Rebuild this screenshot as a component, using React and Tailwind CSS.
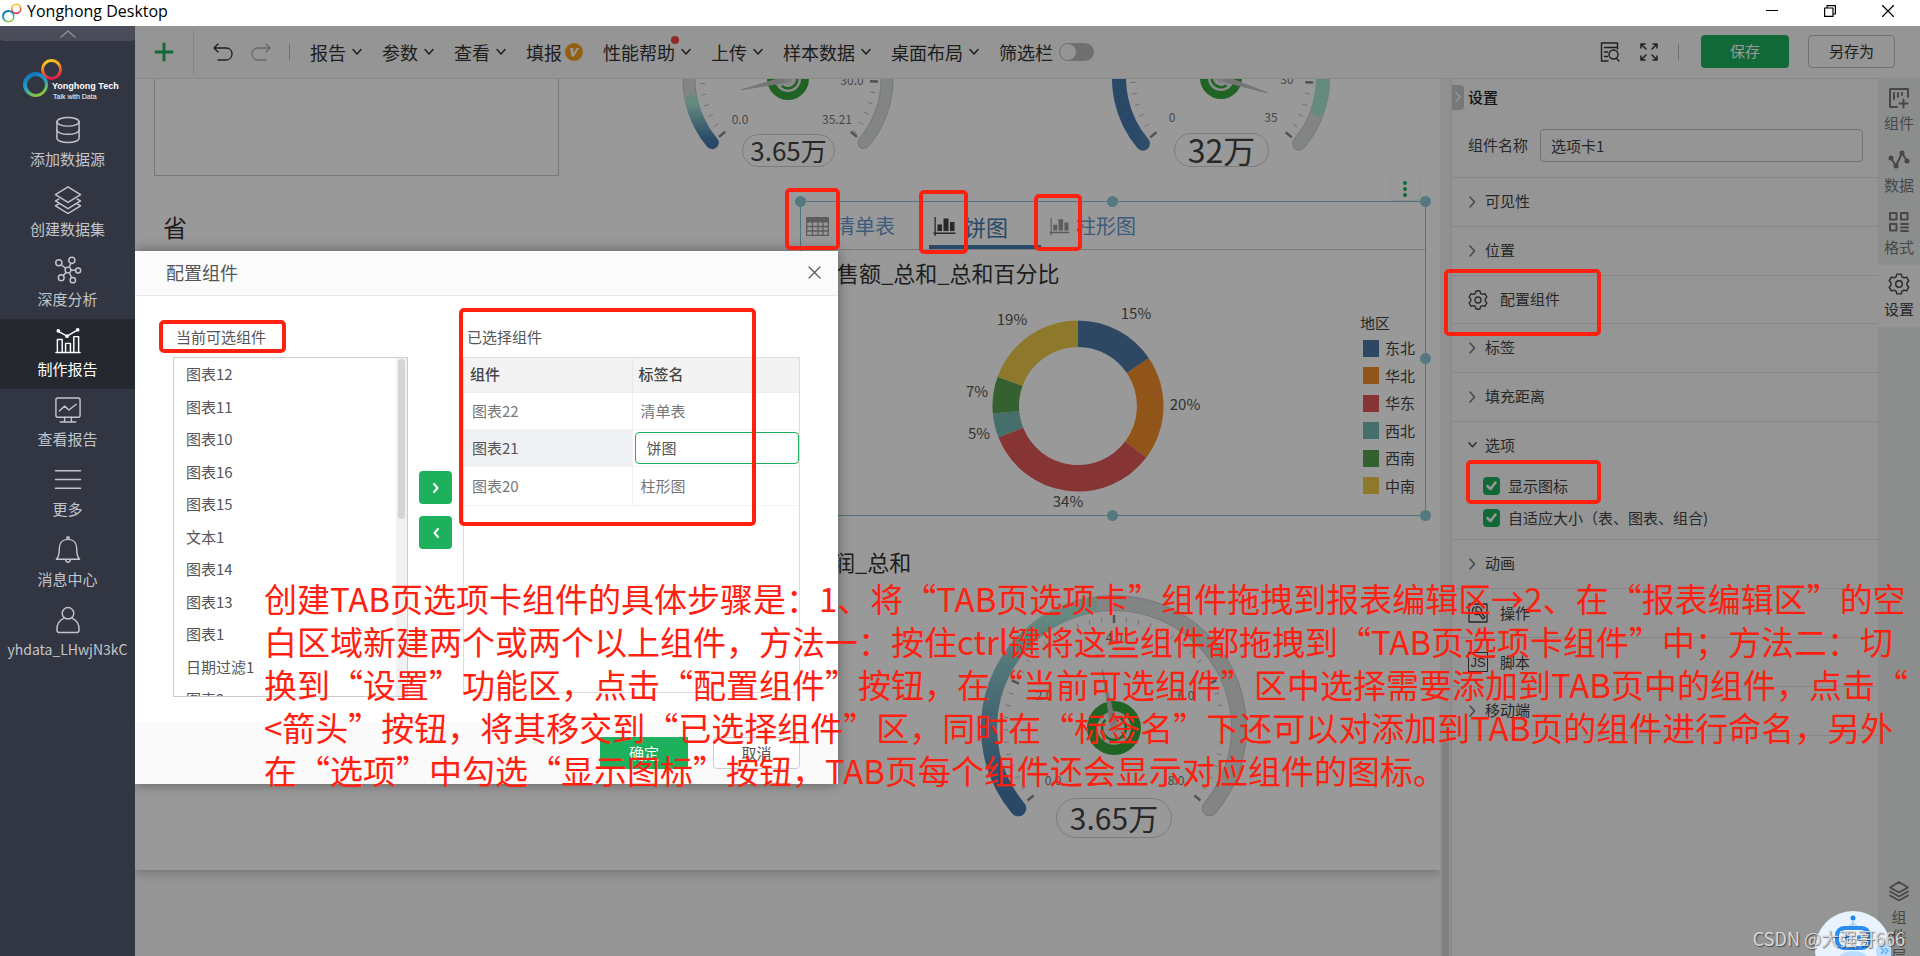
import React from "react";

const polar = (cx, cy, r, deg) => {
  const a = (deg * Math.PI) / 180;
  return [cx + r * Math.sin(a), cy - r * Math.cos(a)];
};

const arc = (cx, cy, r, from, to) => {
  const [x1, y1] = polar(cx, cy, r, from);
  const [x2, y2] = polar(cx, cy, r, to);
  return `M${x1} ${y1}A${r} ${r} 0 ${to - from > 180 ? 1 : 0} 1 ${x2} ${y2}`;
};

const ringSlice = (c, ro, ri, from, to) => {
  const [x1, y1] = polar(c, c, ro, from);
  const [x2, y2] = polar(c, c, ro, to);
  const [x3, y3] = polar(c, c, ri, to);
  const [x4, y4] = polar(c, c, ri, from);
  return `M${x1} ${y1}A${ro} ${ro} 0 0 1 ${x2} ${y2}L${x3} ${y3}A${ri} ${ri} 0 0 0 ${x4} ${y4}Z`;
};

function Svg({ className, children, viewBox = "0 0 24 24", width = 1.5 }) {
  return (
    <svg className={className} viewBox={viewBox} fill="none" stroke="currentColor" strokeWidth={width} strokeLinecap="round" strokeLinejoin="round" aria-hidden="true">
      {children}
    </svg>
  );
}

const ChevronDown = ({ className = "h-[10px] w-[10px]" }) => (
  <Svg className={className} viewBox="0 0 10 10">
    <path d="M1 2.500 5 7l4-4.500" />
  </Svg>
);
const ChevronRight = () => (
  <Svg className="h-3 w-[9px] text-[#777]" viewBox="0 0 9 12">
    <path d="M2 1l4.500 5L2 11" />
  </Svg>
);

function Rings({ className, id }) {
  return (
    <svg className={className} viewBox="0 0 40 38" fill="none" aria-hidden="true">
      <defs>
        <linearGradient id={`${id}a`} x1="0.300" y1="0" x2="0.500" y2="1">
          <stop offset="0" stopColor="#f8d418" />
          <stop offset="0.300" stopColor="#f7a81e" />
          <stop offset="0.600" stopColor="#ee5a30" />
          <stop offset="1" stopColor="#e3104e" />
        </linearGradient>
        <linearGradient id={`${id}b`} x1="0.200" y1="0" x2="0.600" y2="1">
          <stop offset="0" stopColor="#1668b4" />
          <stop offset="0.500" stopColor="#1ba0c4" />
          <stop offset="1" stopColor="#9acb2c" />
        </linearGradient>
      </defs>
      <path fillRule="evenodd" fill={`url(#${id}a)`} d="M28.500 0a10.500 10.500 0 1 1 0 21a10.500 10.500 0 1 1 0-21ZM28.500 3a7.500 7.500 0 1 0 0 15a7.500 7.500 0 1 0 0-15Z" />
      <path fillRule="evenodd" fill={`url(#${id}b)`} d="M12.500 13a12.500 12.500 0 1 1 0 25a12.500 12.500 0 1 1 0-25ZM13 17a9 9 0 1 0 0 18a9 9 0 1 0 0-18Z" />
    </svg>
  );
}

/* ---------- left navigation ---------- */

const navIcons = {
  db: (
    <>
      <ellipse cx="14" cy="6" rx="11.500" ry="4.500" />
      <path d="M2.500 6v17c0 2.500 5.200 4.500 11.500 4.500s11.500-2 11.500-4.500V6" />
      <path d="M2.500 14.500c0 2.500 5.200 4.500 11.500 4.500s11.500-2 11.500-4.500" />
    </>
  ),
  layers: (
    <>
      <path d="M14 1 27 9 14 17 1 9Z" />
      <path d="M4.500 13.500 1 15.500l13 8 13-8-3.500-2" />
      <path d="M4.500 18.500 1 20.500l13 8 13-8-3.500-2" />
    </>
  ),
  graph: (
    <>
      <circle cx="4.500" cy="7" r="3.200" />
      <circle cx="18" cy="4.500" r="3.200" />
      <circle cx="24.500" cy="15" r="2.600" />
      <circle cx="7" cy="22.500" r="3" />
      <circle cx="19" cy="25" r="2.800" />
      <circle cx="14" cy="14.500" r="3" />
      <path d="M7 9 11.500 12.700M17 7.500l-1.800 4.200M17 14.700h4.800M12 17l-3 3.300M15.300 17.300l2.500 5" />
    </>
  ),
  report: (
    <>
      <path d="M3 27.500V14h5v13.500M11.500 27.500V18h5v9.500M20 27.500V11h5v16.500M1.500 27.500h25" />
      <path d="M4 5.500 13 10.500 24 4" />
      <circle cx="4" cy="5" r="1.200" />
      <circle cx="13" cy="10.500" r="1.200" />
      <circle cx="24" cy="4" r="1.200" />
    </>
  ),
  screen: (
    <>
      <rect x="1.500" y="2" width="25" height="20" rx="2" />
      <path d="M5 15.500 10.500 10.500 15 14.500 22.500 8.500M10.500 22v4.500M17.500 22v4.500M6 27h16" />
    </>
  ),
  menu: <path d="M1 5h26M1 14h26M1 23h26" />,
  bell: (
    <>
      <path d="M2 24c2.500-2 3-5 3-11 0-6 3.500-9.500 9-9.500s9 3.500 9 9.500c0 6 .5 9 3 11Z" />
      <path d="M13 3V1h2v2M11.500 24.500c.5 3.500 4.500 3.500 5 0" />
    </>
  ),
  user: (
    <>
      <circle cx="14" cy="7.500" r="6" />
      <path d="M10 12.500C5 14.500 2.500 18.500 2.500 24.500c0 2 1 3 3 3h17c2 0 3-1 3-3 0-6-2.500-10-7.500-12" />
    </>
  ),
};

const navItems = [
  ["db", "添加数据源"],
  ["layers", "创建数据集"],
  ["graph", "深度分析"],
  ["report", "制作报告"],
  ["screen", "查看报告"],
  ["menu", "更多"],
  ["bell", "消息中心"],
  ["user", "yhdata_LHwjN3kC"],
];

function Sidebar() {
  return (
    <nav className="flex w-[135px] shrink-0 flex-col bg-[#323643] text-[#c3c5ca]">
      <button aria-label="收起" className="flex h-[15px] w-full items-center justify-center rounded-b-sm bg-[#4a4d59] text-[#8f919a]">
        <Svg className="h-2 w-4" viewBox="0 0 16 8"><path d="M1 7l7-6 7 6" /></Svg>
      </button>
      <div className="flex h-[68px] items-start pl-[23px] pt-[18px]">
        <Rings id="nav" className="h-[38px] w-10 shrink-0" />
        <div className="-ml-[11px] mt-[22px] whitespace-nowrap font-['Liberation_Sans',sans-serif] text-white">
          <div className="text-[9px] font-bold leading-[11px]">Yonghong Tech</div>
          <div className="pl-px text-[7px] leading-[9px]">Talk with Data</div>
        </div>
      </div>
      {navItems.map(([icon, label]) => (
        <a key={label} href={`#${icon}`} className={`flex h-[70px] flex-col items-center gap-[3px] pt-[7px] ${icon === "report" ? "bg-[#25282f] text-white" : ""}`}>
          <Svg className="h-7 w-7" viewBox="0 0 28 29">{navIcons[icon]}</Svg>
          <span className={`leading-6 ${icon === "user" ? "text-[14px]" : "text-[15px]"}`}>{label}</span>
        </a>
      ))}
    </nav>
  );
}

/* ---------- toolbar ---------- */

function MenuItem({ label, dot }) {
  return (
    <button className="relative flex items-center gap-[6px]">
      {label}
      <ChevronDown />
      {dot && <span className="absolute right-3 -top-1 h-2 w-2 rounded-full bg-[#f0453f]" />}
    </button>
  );
}

function Toolbar() {
  return (
    <header className="flex h-[53px] shrink-0 items-center border-b border-[#e4e4e4] bg-[#f8f8f8] text-[#333]">
      <button aria-label="新建" className="flex h-11 w-[59px] items-center justify-center border-r border-[#dedede] text-[#1db05d]">
        <Svg className="h-5 w-5" width={3.5}><path d="M12 1v22M1 12h22" strokeLinecap="butt" /></Svg>
      </button>
      <div className="flex items-center gap-[18px] pl-[19px]">
        <button aria-label="撤销"><Svg className="h-5 w-5" viewBox="0 0 20 20" width={1.3}><path d="M5 2 1 6l4 4M1.500 6H13c8 0 8 12 0 12H5" /></Svg></button>
        <button aria-label="重做" className="text-[#aaa]"><Svg className="h-5 w-5" viewBox="0 0 20 20" width={1.3}><path d="M15 2l4 4-4 4M18.500 6H7c-8 0-8 12 0 12h8" /></Svg></button>
        <span className="h-4 w-px bg-[#bbb]" />
      </div>
      <div className="flex items-center gap-5 whitespace-nowrap pl-5 text-[18px] leading-6">
        <MenuItem label="报告" />
        <MenuItem label="参数" />
        <MenuItem label="查看" />
        <button className="flex items-center gap-[3px]">
          填报
          <svg className="h-[18px] w-[18px]" viewBox="0 0 18 18" aria-hidden="true">
            <circle cx="9" cy="9" r="9" fill="#f5a01e" />
            <path d="M5 5h3l.6 5L11.500 5H14L9 13.500H6.500Z" fill="#fff" />
          </svg>
        </button>
        <MenuItem label="性能帮助" dot />
        <MenuItem label="上传" />
        <MenuItem label="样本数据" />
        <MenuItem label="桌面布局" />
        <div className="flex items-center gap-[6px]">
          <span id="filter-bar">筛选栏</span>
          <button role="switch" aria-checked="false" aria-labelledby="filter-bar" className="flex h-[18px] w-[35px] items-center rounded-full bg-[#bbb] p-px">
            <span className="h-4 w-4 rounded-full bg-[#f8f8f8]" />
          </button>
        </div>
      </div>
      <div className="ml-auto flex items-center gap-5 pr-[25px] text-[15px]">
        <button aria-label="预览"><Svg className="h-5 w-5" viewBox="0 0 20 20" width={1.4}><path d="M8 19H1.500V1h16v6M4.500 5.500h13M4.500 10h3M4.500 14.500h3" /><circle cx="13.500" cy="12.500" r="4.500" /><path d="M16.500 16.500 19 19" /></Svg></button>
        <button aria-label="全屏"><Svg className="h-[18px] w-[18px]" viewBox="0 0 18 18"><path d="M1 5V1h4M1 1l5 5M13 1h4v4M17 1l-5 5M1 13v4h4M1 17l5-5M17 13v4h-4M17 17l-5-5" /></Svg></button>
        <span className="mr-[2px] h-4 w-px bg-[#bbb]" />
        <button className="mb-px h-[33px] w-[88px] rounded-sm bg-[#1db05d] text-white">保存</button>
        <button className="-ml-px mb-px h-[33px] w-[87px] rounded-sm border border-[#bdbdbd]">另存为</button>
      </div>
    </header>
  );
}

/* ---------- report canvas ---------- */

function Gauge({ id, className, cx, cy, r, band, value, max, step, minor, labels, hub, vertical = true, w, h }) {
  const angle = (v) => -130 + (v / max) * 260;
  const tickR = r - band / 2 - r * 0.065;
  const ticks = [];
  for (let v = 0; v <= max + 0.001; v += minor) ticks.push([v, Math.abs(v / step - Math.round(v / step)) < 0.01]);
  if (max % step > 0.01) ticks.push([max, true]);
  const a = angle(value);
  const tip = polar(cx, cy, r * 0.48, a);
  const l = polar(cx, cy, 3, a - 90);
  const rr = polar(cx, cy, 3, a + 90);
  return (
    <svg className={className} viewBox={`0 0 ${w} ${h}`} fill="none" role="img" aria-label="仪表盘">
      <defs>
        <linearGradient id={id} x1="0" y1={vertical ? 1 : 0} x2={vertical ? 0 : 1} y2="0">
          <stop offset="0.080" stopColor="#467bae" />
          <stop offset="0.950" stopColor="#a8e6d6" />
        </linearGradient>
      </defs>
      <path d={arc(cx, cy, r, -130, 130)} stroke="#c4caca" strokeWidth={band} strokeLinecap="round" />
      <path d={arc(cx, cy, r, -130, 130)} stroke="#d9dedc" strokeWidth={band - 2} strokeLinecap="round" />
      <path d={arc(cx, cy, r, -130, a)} stroke={`url(#${id})`} strokeWidth={band} strokeLinecap="round" />
      {ticks.map(([v, major]) => {
        const [x1, y1] = polar(cx, cy, tickR - (major ? 4 : 3), angle(v));
        const [x2, y2] = polar(cx, cy, tickR + (major ? 4 : 2), angle(v));
        return <line key={v} x1={x1} y1={y1} x2={x2} y2={y2} stroke={major ? "#888" : "#bbb"} strokeWidth={major ? 2.5 : 1} />;
      })}
      <circle cx={cx} cy={cy} r={hub} fill="#34a73e" />
      <circle cx={cx} cy={cy} r={hub * 0.62} fill="#e8e8e8" />
      <path d={arc(cx, cy, hub * 0.44, a + 35, a + 325)} stroke="#34a73e" strokeWidth="2.500" />
      <path d={`M${l[0]} ${l[1]}L${tip[0]} ${tip[1]}L${rr[0]} ${rr[1]}Z`} fill="#c4c4c4" stroke="#c4c4c4" />
      <circle cx={cx} cy={cy} r="4" fill="#cfcfcf" />
      {labels.map(([t, x, y]) => (
        <text key={t} x={x} y={y + 4} textAnchor="middle" fill="#777" className="text-[12px]">{t}</text>
      ))}
    </svg>
  );
}

const slices = [
  [0, 56, "#4e79a7"],
  [56, 127, "#f28e2c"],
  [127, 248.5, "#e15759"],
  [248.5, 265, "#76b7b2"],
  [265, 290, "#59a14f"],
  [290, 360, "#edc949"],
];

const pieLabels = [
  ["19%", 69, 33],
  ["15%", 193, 27],
  ["20%", 242, 118],
  ["34%", 125, 215],
  ["5%", 36, 147],
  ["7%", 34, 105],
];

const legend = [
  ["东北", "bg-[#4e79a7]"],
  ["华北", "bg-[#f28e2c]"],
  ["华东", "bg-[#e15759]"],
  ["西北", "bg-[#76b7b2]"],
  ["西南", "bg-[#59a14f]"],
  ["中南", "bg-[#edc949]"],
];

const BarIcon = ({ className }) => (
  <svg className={className} viewBox="0 0 22 19" fill="currentColor" aria-hidden="true">
    <path d="M1 0h1.300v15.500H22V17H2.300v2H1v-2H0v-1.500h1ZM4 7.500h4.500V14H4ZM10 1.500h5V14h-5ZM16.500 5H21v9h-4.500Z" />
  </svg>
);

const TableIcon = () => (
  <svg className="h-[19px] w-[23px] text-[#999]" viewBox="0 0 23 19" fill="none" stroke="currentColor" aria-hidden="true">
    <path d="M.7.700h21.600v17.600H.7ZM.7 9.500h21.600M.7 14h21.600M6.500 5v13M12 5v13M17 5v13" strokeWidth="1.300" />
    <path d="M.7.700h21.600V5H.7Z" fill="currentColor" />
  </svg>
);

const handles = [
  "-left-[6px] -top-[6px]",
  "left-1/2 -ml-[6px] -top-[6px]",
  "-right-[6px] -top-[6px]",
  "-right-[6px] top-1/2 -mt-[6px]",
  "-right-[6px] -bottom-[6px]",
  "left-1/2 -ml-[6px] -bottom-[6px]",
  "-left-[6px] -bottom-[6px]",
  "-left-[6px] top-1/2 -mt-[6px]",
];

function TabCard() {
  return (
    <section className="absolute left-[665px] top-[122px] h-[315px] w-[626px] border border-[#86c4d4]">
      <div role="tablist" className="flex h-12 items-end border-b border-[#ccc] pl-[5px] text-[20px] text-[#6698cf]">
        <button role="tab" aria-selected="false" className="flex h-[42px] w-[123px] items-center gap-[6px] whitespace-nowrap pb-1">
          <TableIcon />清单表
        </button>
        <button role="tab" aria-selected="true" className="flex h-[42px] w-[112px] items-center gap-2 whitespace-nowrap border-b-4 border-[#457aae] pl-1 text-[22px] text-[#457aae]">
          <BarIcon className="h-[19px] w-[23px] text-[#444]" />饼图
        </button>
        <button role="tab" aria-selected="false" className="flex h-[42px] items-center gap-[6px] whitespace-nowrap pb-1 pl-2">
          <BarIcon className="h-[17px] w-[21px] text-[#999]" />柱形图
        </button>
      </div>
      <h2 className="pl-[14px] pt-[5px] text-[22px] leading-[34px] text-[#333]">销售额_总和_总和百分比</h2>
      <svg className="absolute left-[142px] top-[85px] h-[226px] w-[270px]" viewBox="0 0 270 226" role="img" aria-label="销售额占比">
        <g transform="translate(49.500 33.500)">
          {slices.map(([a, b, c]) => <path key={a} d={ringSlice(85.5, 85.5, 59, a, b)} fill={c} />)}
        </g>
        {pieLabels.map(([t, x, y]) => (
          <text key={t} x={x} y={y + 5} textAnchor="middle" fill="#555" className="text-[15px]">{t}</text>
        ))}
      </svg>
      <div className="absolute right-[34px] top-[111px] text-[15px] text-[#444]">
        <div className="leading-5">地区</div>
        <ul className="flex h-[164px] w-[31px] flex-col justify-between pt-1">
          {legend.map(([name, bg]) => (
            <li key={name} className="ml-[3px] flex items-center gap-[6px] whitespace-nowrap leading-[22px]">
              <span className={`h-[17px] w-4 shrink-0 ${bg}`} />{name}
            </li>
          ))}
        </ul>
      </div>
      {handles.map((pos) => <span key={pos} className={`absolute h-[11px] w-[11px] rounded-full bg-[#90c8d6] ${pos}`} />)}
      <button aria-label="更多操作" className="absolute -top-[25px] right-[6px] flex h-[23px] w-7 items-center justify-center rounded bg-white text-[#1db05d] shadow">
        <svg className="h-4 w-1" viewBox="0 0 4 16" fill="currentColor" aria-hidden="true"><circle cx="2" cy="2" r="2" /><circle cx="2" cy="8" r="2" /><circle cx="2" cy="14" r="2" /></svg>
      </button>
    </section>
  );
}

const pill = "absolute flex items-center justify-center rounded-full border border-[#d0d0d0] pb-[2px] text-[#444]";

function Canvas() {
  return (
    <div className="min-w-0 flex-1 overflow-hidden bg-[#f8f8f8]">
      <div className="relative h-[791px] overflow-hidden bg-white shadow-[0_2px_10px_rgba(0,0,0,0.25)]">
        <div className="absolute left-[19px] top-0 h-[97px] w-[405px] border-x border-b border-[#c8c8c8]" />
        <h2 className="absolute left-[28px] top-[131px] text-[24px] leading-[34px] text-[#333]">省</h2>

        <Gauge id="g1" className="absolute left-[543px] top-0 h-[80px] w-[220px]" w={220} h={80} cx={110} cy={0} r={99} band={13} hub={21} value={3.65} max={35.21} step={10} minor={1}
          labels={[["0.0", 62, 41], ["35.21", 159, 41], ["30.0", 174, 2]]} />
        <div className={`${pill} left-[607px] top-[55px] h-[33px] w-[93px] text-[26px]`}>3.65万</div>

        <Gauge id="g2" className="absolute left-[971px] top-0 h-[80px] w-[230px]" w={230} h={80} cx={115} cy={-1} r={102} band={14} hub={21} value={32} max={35} step={10} minor={1} vertical={false}
          labels={[["0", 66, 39], ["35", 165, 39], ["30", 181, 1]]} />
        <div className={`${pill} left-[1039px] top-[54px] h-[34px] w-[95px] text-[32px]`}>32万</div>

        <TabCard />

        <h2 className="absolute left-[676px] top-[465px] text-[22px] leading-[34px] text-[#333]">利润_总和</h2>
        <Gauge id="g3" className="absolute left-[839px] top-[509px] h-[240px] w-[280px]" w={280} h={240} cx={140} cy={140} r={125} band={16} hub={27} value={3.65} max={8} step={2} minor={0.2}
          labels={[["0.0", 79, 193], ["2.0", 70, 108], ["4.0", 140, 50], ["6.0", 212, 108], ["8.0", 202, 193]]} />
        <div className={`${pill} left-[921px] top-[719px] h-10 w-[116px] text-[30px]`}>3.65万</div>
      </div>
    </div>
  );
}

/* ---------- settings panel ---------- */

const Gear = ({ className }) => (
  <Svg className={className} viewBox="0 0 20 20" width={1.3}>
    <path d="M8 1h4l.6 2.400 1.900 1 2.400-.7 2 3.400L17.200 9v2l1.700 1.900-2 3.400-2.400-.7-1.900 1L12 19H8l-.6-2.400-1.900-1-2.400.7-2-3.400L2.800 11V9L1.100 7.100l2-3.400 2.400.7 1.900-1Z" />
    <circle cx="10" cy="10" r="3" />
  </Svg>
);

const row = "flex w-full items-center border-b border-[#e2e2e2] pl-4";

const Section = ({ label }) => (
  <button className={`${row} h-[49px] gap-2 pb-px`}><ChevronRight />{label}</button>
);

function Check({ id, label }) {
  return (
    <div className="flex h-8 items-center gap-2 pl-[31px]">
      <span className="relative flex h-[18px] w-[17px]">
        <input id={id} type="checkbox" defaultChecked className="h-[18px] w-[17px] appearance-none rounded-sm bg-[#1db05d]" />
        <Svg className="pointer-events-none absolute left-[3px] top-1 h-[10px] w-[11px] text-white" viewBox="0 0 11 10" width={2.5}><path d="M1.500 5 4.500 8 9.500 1.500" /></Svg>
      </span>
      <label htmlFor={id} className="whitespace-nowrap">{label}</label>
    </div>
  );
}

function SettingsPanel() {
  return (
    <aside className="w-[427px] shrink-0 border-l border-[#e2e2e2] bg-[#f8f8f8] text-[15px] text-[#444]">
      <div className="flex items-center gap-1 pt-1">
        <button aria-label="收起面板" className="flex h-[25px] w-3 items-center justify-center rounded-r-sm bg-[#c9c9c9] text-white">
          <Svg className="h-3 w-2" viewBox="0 0 9 12"><path d="M2 1l5 5-5 5" /></Svg>
        </button>
        <h2 className="pb-px font-medium leading-[27px] text-[#222]">设置</h2>
      </div>
      <div className="flex h-[67px] items-center gap-3 border-b border-[#e2e2e2] pl-4 pr-[15px] pt-[2px]">
        <label htmlFor="component-name" className="whitespace-nowrap">组件名称</label>
        <input id="component-name" defaultValue="选项卡1" className="h-[33px] min-w-0 flex-1 rounded-sm border border-[#bdbdbd] bg-transparent px-[10px]" />
      </div>
      <Section label="可见性" />
      <Section label="位置" />
      <button className={`${row} h-12 gap-3`}><Gear className="h-5 w-5" />配置组件</button>
      <Section label="标签" />
      <Section label="填充距离" />
      <div className="h-[118px] border-b border-[#e2e2e2]">
        <button className="flex h-12 w-full items-center gap-2 pb-[2px] pl-4"><ChevronDown className="h-[10px] w-[9px]" />选项</button>
        <Check id="show-icon" label="显示图标" />
        <Check id="fit-size" label="自适应大小（表、图表、组合)" />
      </div>
      <Section label="动画" />
      <button className={`${row} h-[49px] gap-3`}>
        <Svg className="h-5 w-5" viewBox="0 0 20 20" width={1.3}><rect x="1" y="1" width="18" height="18" /><path d="M6 4c-4 5 1 9 5 7l4 5 2-2-4-4c2-4-2-7-5-6M8 4v4l3 1" /></Svg>操作
      </button>
      <button className={`${row} h-[49px] gap-3`}>
        <span className="flex h-5 w-5 items-center justify-center border border-[#444] font-['Liberation_Sans',sans-serif] text-[13px] leading-none" aria-hidden="true">JS</span>脚本
      </button>
      <Section label="移动端" />
    </aside>
  );
}

function Rail() {
  const item = "flex h-[62px] w-full flex-col items-center gap-[2px] pt-2";
  return (
    <div className="flex w-[42px] shrink-0 flex-col items-center overflow-hidden bg-[#e8edea] text-[15px] leading-6 text-[#777]">
      <button className={item}><Svg className="h-[22px] w-[22px] shrink-0" viewBox="0 0 22 22" width={2}><path d="M20 10V2H2v18h7M6 6v6M10 6v4M14 6v2M15.500 12.500v8M11.500 16.500h8" /></Svg>组件</button>
      <button className={item}><Svg className="h-[22px] w-[22px] shrink-0" viewBox="0 0 22 22" width={2}><path d="M3 9l5 8 6-13 5 8" /><circle cx="3" cy="9" r="1.500" /><circle cx="8" cy="17" r="1.500" /><circle cx="14" cy="4" r="1.500" /><circle cx="19" cy="12" r="1.500" /></Svg>数据</button>
      <button className={item}><Svg className="h-[22px] w-[22px] shrink-0" viewBox="0 0 22 22" width={2}><path d="M2 2h6.500v6.500H2ZM13 2h6.500v6.500H13ZM2 13h6.500v6.500H2ZM13 13h7M13 16.500h7M13 20h7" /></Svg>格式</button>
      <button className={`${item} bg-[#f8f8f8] text-[#444]`}><Gear className="h-[22px] w-[22px] shrink-0" />设置</button>
      <button className="mt-auto flex w-5 flex-col items-center leading-[19px]">
        <Svg className="mb-[6px] h-5 w-5 shrink-0" viewBox="0 0 20 20" width={1.7}><path d="M10 1l9 5.500-9 5-9-5ZM1 10.500l9 5 9-5M1 14.500l9 5 9-5" /></Svg>
        <span className="-mb-[8px]">组<br />件<br />层</span>
      </button>
    </div>
  );
}

/* ---------- dialog ---------- */

const available = ["图表12", "图表11", "图表10", "图表16", "图表15", "文本1", "图表14", "图表13", "图表1", "日期过滤1", "图表2"];

function Dialog() {
  return (
    <div role="dialog" aria-labelledby="dialog-title" className="absolute left-0 top-[225px] flex h-[533px] w-[703px] flex-col bg-white text-[15px] text-[#555] shadow-[0_0_12px_rgba(0,0,0,0.4)]">
      <div className="flex h-[45px] items-center justify-between border-b border-[#e8e8e8] bg-[#fbfbfb] pb-px pl-[31px] pr-[17px]">
        <h2 id="dialog-title" className="text-[18px]">配置组件</h2>
        <button aria-label="关闭"><Svg className="h-[13px] w-[13px]" viewBox="0 0 13 13" width={1.2}><path d="M1 1l11 11M12 1 1 12" /></Svg></button>
      </div>
      <div className="flex flex-1 px-[38px] pt-[29px]">
        <div className="w-[235px]">
          <h3 className="mb-2 pl-[3px] leading-6">当前可选组件</h3>
          <div className="flex h-[340px] overflow-hidden border border-[#ccc]">
            <ul className="flex h-[358px] flex-1 flex-col pl-3">
              {available.map((name) => <li key={name} className="flex flex-1 items-center">{name}</li>)}
            </ul>
            <div className="w-[11px] bg-[#f0f1f3] px-[2px] pt-px"><div className="h-[160px] rounded-full bg-[#d5d5d5]" /></div>
          </div>
        </div>
        <div className="flex w-[55px] flex-col items-center gap-3 pt-[146px]">
          <button aria-label="添加" className="flex h-[33px] w-[33px] items-center justify-center rounded-sm bg-[#1db05d] text-white"><Svg className="h-3 w-2" viewBox="0 0 8 12" width={2}><path d="M2 2l3.500 4L2 10" /></Svg></button>
          <button aria-label="移除" className="flex h-[33px] w-[33px] items-center justify-center rounded-sm bg-[#1db05d] text-white"><Svg className="h-3 w-2" viewBox="0 0 8 12" width={2}><path d="M6 2 2.500 6 6 10" /></Svg></button>
        </div>
        <div className="flex-1">
          <h3 className="mb-2 pl-1 leading-6">已选择组件</h3>
          <div className="h-[336px] border border-[#ddd]">
            <table className="w-full table-fixed border-collapse text-left text-[#777]">
              <thead>
                <tr className="h-[34px] border-b border-[#eee] bg-[#f3f3f3] text-[#444]">
                  <th className="w-[168px] border-r border-[#e8e8e8] p-0 pb-[2px] pl-[6px] font-medium">组件</th>
                  <th className="p-0 pb-[2px] pl-[6px] font-medium">标签名</th>
                </tr>
              </thead>
              <tbody>
                <tr className="h-[37px] border-b border-[#f3f3f3]">
                  <td className="border-r border-[#f0f0f0] p-0 pl-2 pt-px">图表22</td>
                  <td className="p-0 pl-2 pt-px">清单表</td>
                </tr>
                <tr className="h-[37px] border-b border-[#f3f3f3]">
                  <td className="border-r border-[#f0f0f0] bg-[#eff0f3] p-0 pl-2 pt-px text-[#555]">图表21</td>
                  <td className="p-0 pl-[2px]">
                    <input aria-label="标签名" defaultValue="饼图" className="block h-8 w-full rounded-sm border border-[#1db05d] bg-white px-[11px] text-[#555]" />
                  </td>
                </tr>
                <tr className="h-[39px] border-b border-[#f3f3f3]">
                  <td className="border-r border-[#f0f0f0] p-0 pl-2 pt-px">图表20</td>
                  <td className="p-0 pl-2 pt-px">柱形图</td>
                </tr>
              </tbody>
            </table>
          </div>
        </div>
      </div>
      <div className="flex h-[62px] items-center justify-end gap-[25px] bg-[#fafafa] pr-[38px]">
        <button className="h-8 w-[88px] bg-[#1db05d] text-white">确定</button>
        <button className="h-8 w-[87px] rounded-sm border border-[#ccc] bg-white">取消</button>
      </div>
    </div>
  );
}

/* ---------- annotations ---------- */

const marks = [
  "left-[785px] top-[188px] h-[62px] w-[55px]",
  "left-[919px] top-[190px] h-[64px] w-[49px]",
  "left-[1034px] top-[194px] h-[57px] w-[48px]",
  "left-[1444px] top-[269px] h-[67px] w-[157px]",
  "left-[1466px] top-[460px] h-[44px] w-[135px]",
  "left-[159px] top-[320px] h-[33px] w-[127px]",
  "left-[459px] top-[308px] h-[218px] w-[297px]",
];

const notes = [
  "创建TAB页选项卡组件的具体步骤是：1、将“TAB页选项卡”组件拖拽到报表编辑区→2、在“报表编辑区”的空",
  "白区域新建两个或两个以上组件，方法一：按住ctrl键将这些组件都拖拽到“TAB页选项卡组件”中；方法二：切",
  "换到“设置”功能区，点击“配置组件”按钮，在“当前可选组件”区中选择需要添加到TAB页中的组件，点击“",
  "<箭头”按钮，将其移交到“已选择组件”区，同时在“标签名”下还可以对添加到TAB页的组件进行命名，另外",
  "在“选项”中勾选“显示图标”按钮，TAB页每个组件还会显示对应组件的图标。",
];

function Annotations() {
  return (
    <div className="pointer-events-none absolute inset-0 overflow-hidden">
      {marks.map((m) => <div key={m} className={`absolute rounded-[5px] border-4 border-[#ff2010] ${m}`} />)}
      <div className="absolute left-[264px] top-[577px] whitespace-nowrap text-[33px] leading-[43px] text-[#ff2010]">
        {notes.map((n) => <p key={n}>{n}</p>)}
      </div>
    </div>
  );
}

function Assistant() {
  return (
    <svg className="absolute -bottom-[31px] right-[29px] h-[76px] w-[76px]" viewBox="0 0 76 76" role="img" aria-label="助手">
      <circle cx="38" cy="38" r="38" fill="#e9f3ff" />
      <path d="M33 17a5 5 0 0 1 10 0Z" fill="#b9dcff" />
      <circle cx="38" cy="7" r="2.500" fill="#1e86ee" />
      <path d="M38 9v5" stroke="#9ccbfb" strokeWidth="1.500" />
      <rect x="20" y="15" width="36" height="24" rx="9" fill="#2b8df0" />
      <rect x="24" y="19" width="28" height="16" rx="6" fill="#f2f8ff" />
      <rect x="30" y="24" width="4" height="6" rx="2" fill="#2b8df0" />
      <rect x="42" y="24" width="4" height="6" rx="2" fill="#2b8df0" />
      <path d="M24 47a14 7 0 0 1 28 0Z" fill="#b9dcff" />
      <circle cx="70" cy="40" r="9" fill="#b9dcff" />
      <path d="M66 37l3 3-3 3M70 37l3 3-3 3" stroke="#5aa8f5" strokeWidth="1.200" fill="none" />
    </svg>
  );
}

export default function App() {
  return (
    <div className="relative flex h-screen flex-col overflow-hidden bg-white font-['Noto_Sans_CJK_SC',sans-serif]">
      <div className="flex h-[26px] shrink-0 items-center justify-between pl-[2px] pr-[26px] text-black">
        <div className="flex items-center gap-[5px]">
          <Rings id="title" className="h-5 w-5" />
          <span className="pb-1 font-['Open_Sans',sans-serif] text-[16px] leading-5">Yonghong Desktop</span>
        </div>
        <div className="flex items-center gap-[46px] pb-1">
          <button aria-label="最小化"><Svg className="h-3 w-3" viewBox="0 0 12 12" width={1}><path d="M0 5.500h12" /></Svg></button>
          <button aria-label="还原"><Svg className="h-3 w-3" viewBox="0 0 12 12" width={1.2}><path d="M.6 3h8.400v8.400H.6ZM3 3V.6h8.400V9H9" /></Svg></button>
          <button aria-label="关闭窗口"><Svg className="h-3 w-3" viewBox="0 0 12 12" width={1.2}><path d="M.5.5l11 11M11.500.5l-11 11" /></Svg></button>
        </div>
      </div>
      <div className="flex min-h-0 flex-1">
        <Sidebar />
        <main className="relative flex min-w-0 flex-1 flex-col overflow-hidden">
          <Toolbar />
          <div className="flex min-h-0 flex-1">
            <Canvas />
            <div className="flex w-[11px] shrink-0 flex-col bg-[#f0f0f0]">
              <div className="h-[663px]" />
              <div className="mx-[2px] flex-1 bg-[#d5d5d5]" />
            </div>
            <SettingsPanel />
            <Rail />
          </div>
          <div className="absolute inset-0 bg-black/40" />
          <Assistant />
          <Dialog />
        </main>
      </div>
      <Annotations />
      <div className="pointer-events-none absolute bottom-[6px] right-[15px] text-[18px] leading-6 text-[#d8d8d8] [text-shadow:1px_1px_1px_rgba(0,0,0,0.5)]">CSDN @大强哥666</div>
    </div>
  );
}
